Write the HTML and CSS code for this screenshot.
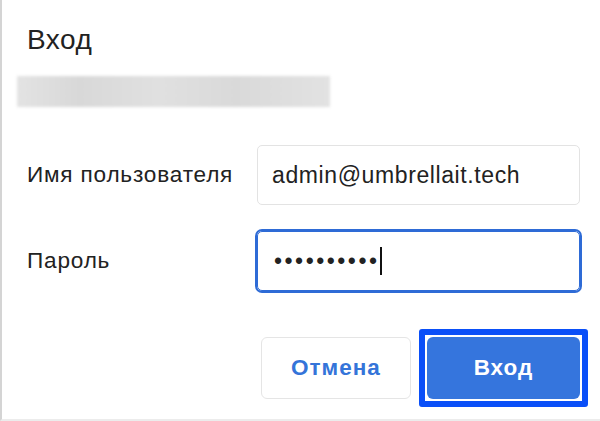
FILE: index.html
```html
<!DOCTYPE html>
<html lang="ru">
<head>
<meta charset="utf-8">
<title>Вход</title>
<link rel="stylesheet" href="styles.css">
</head>
<body>
<div class="dialog">
  <h1 class="title">Вход</h1>
  <div class="blurred"></div>
  <form class="form">
    <label class="label">Имя пользователя</label>
    <div class="field">admin@umbrellait.tech</div>
    <label class="label">Пароль</label>
    <div class="field field-focus"><span class="dots">••••••••••</span><span class="caret"></span></div>
  </form>
  <div class="actions">
    <button class="btn btn-cancel" type="button">Отмена</button>
    <span class="focus-ring"><button class="btn btn-primary" type="button">Вход</button></span>
  </div>
</div>
</body>
</html>
```

FILE: styles.css
```css
html, body {
  margin: 0;
  padding: 0;
  background: #fff;
}
body {
  font-family: "Liberation Sans", Arial, sans-serif;
  color: #222;
}
.dialog {
  box-sizing: border-box;
  width: 600px;
  height: 421px;
  border-left: 2px solid #d4d4d4;
  border-bottom: 2px solid #ececec;
  padding: 22px 20px 0 25px;
  display: flex;
  flex-direction: column;
}
.title {
  margin: 0;
  font-size: 28px;
  font-weight: 400;
  line-height: 36px;
  letter-spacing: 0.5px;
  color: #222;
}
.blurred {
  margin: 18px 0 0 -10px;
  width: 313px;
  height: 31px;
  background: linear-gradient(90deg, #e3e3e3, #d8d8d8 20%, #e0e0e0 45%, #d9d9d9 70%, #e2e2e2);
  filter: blur(1.5px);
}
.form {
  margin-top: 38px;
  display: grid;
  grid-template-columns: 230px 1fr;
  grid-auto-rows: 60px;
  row-gap: 26px;
  align-items: center;
}
.label {
  font-size: 22.6px;
  letter-spacing: 0.8px;
  color: #222;
}
.field {
  box-sizing: border-box;
  height: 60px;
  border: 1px solid #e3e3e3;
  border-radius: 5px;
  padding: 0 14px;
  display: flex;
  align-items: center;
  font-size: 23px;
  letter-spacing: 0.6px;
  color: #222;
}
.field-focus {
  border: 1px solid #2e6bd6;
  box-shadow: 0 0 0 2px #2e6bd6;
  border-radius: 5px;
  padding-left: 16px;
}
.dots {
  font-size: 23px;
  letter-spacing: 2.5px;
}
.caret {
  display: inline-block;
  width: 2px;
  height: 28px;
  background: #111;
  margin-left: 0;
}
.actions {
  margin-top: 46px;
  display: flex;
  justify-content: flex-end;
}
.btn {
  box-sizing: border-box;
  height: 62px;
  border-radius: 6px;
  font-family: "Liberation Sans", Arial, sans-serif;
  font-size: 22.5px;
  font-weight: 700;
  letter-spacing: 1px;
  cursor: pointer;
}
.btn-cancel {
  width: 150px;
  background: #fff;
  border: 1px solid #e5e5e5;
  color: #3474d9;
}
.focus-ring {
  display: flex;
  border: 6px solid #0a4ff8;
  border-radius: 3px;
  padding: 2px;
  margin: -8px -8px -8px 8px;
}
.btn-primary {
  width: 153px;
  background: #3575dd;
  border: none;
  color: #fff;
}
```
